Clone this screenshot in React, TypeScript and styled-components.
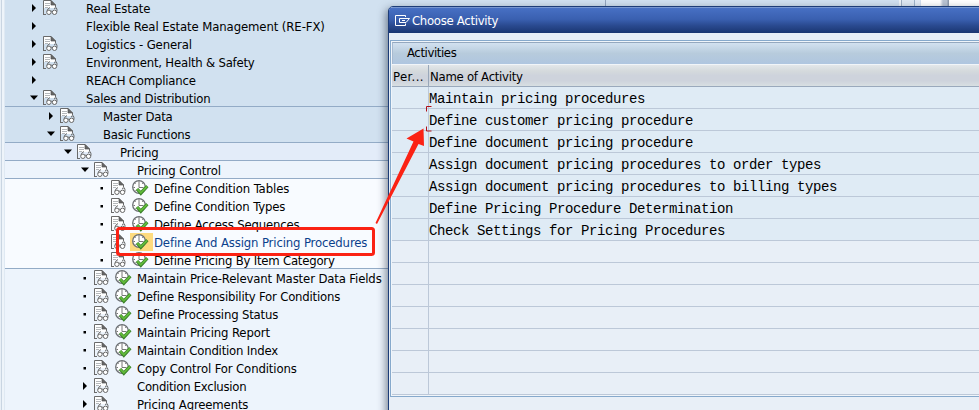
import React from 'react';
import styled, { createGlobalStyle, css } from 'styled-components';

const GlobalStyle = createGlobalStyle`
  *, *::before, *::after { box-sizing: border-box; }
  html, body { margin: 0; padding: 0; overflow: hidden; }
  body { font-family: "DejaVu Sans Condensed", "DejaVu Sans", sans-serif; font-stretch: condensed; font-size: 13px; color: #000; }
`;

const Screen = styled.main`
  position: relative;
  display: flex;
  width: 979px;
  height: 410px;
  overflow: hidden;
  background: #fff;
`;

const Gutter = styled.div`
  flex: 0 0 5px;
  background: linear-gradient(90deg, #e9f0f7 0 1px, #c9d5e2 1px 2px, #eef4fa 2px 4px, #dfe9f3 4px 5px);
`;

const Tree = styled.ul`
  flex: 0 0 894px;
  margin: -1px 0 0;
  padding: 0;
  list-style: none;
  background: linear-gradient(90deg, transparent 600px, #93a5bd 600px 601px, transparent 601px) #d1e1f0;
`;

const Edge = styled.div`
  flex: 1;
  background: linear-gradient(90deg,
    #eef3f8 0 2px, #9fb0c3 2px 3px, #dfe9f3 3px 15px, #9fb4c9 15px 16px,
    #e2ebf5 16px 21px, #d5e0ee 21px 22px, #fff 22px 41px,
    #e6eaf0 42px, #b8c3d2 44px 48px, #8e9bac 49px 50px, #fff 50px);
`;

const Node = styled.li<{ $level: number; $tone: string; $ruled?: boolean }>`
  display: grid;
  grid-template-columns: 15px 21px 23px 1fr;
  grid-template-rows: 18px;
  align-items: center;
  height: 18px;
  padding-left: ${(p) => 21 + p.$level * 17}px;
  background: ${(p) => p.$tone};
  ${(p) => p.$ruled && css`box-shadow: inset 0 -1px #93abc6;`}
`;

const Slot = styled.span<{ $marked?: boolean }>`
  display: flex;
  align-items: center;
  height: 18px;
  padding-left: 2px;
  background: ${(p) => (p.$marked ? '#fddb7f' : 'transparent')};
  svg { display: block; }
`;

const Label = styled.span<{ $tracking: number; $active?: boolean }>`
  height: 18px;
  padding-left: 1px;
  justify-self: start;
  white-space: nowrap;
  line-height: 20px;
  letter-spacing: ${(p) => p.$tracking}px;
  color: ${(p) => (p.$active ? '#0b3f8c' : '#000')};
`;

const Dialog = styled.section`
  position: absolute;
  left: 388px;
  top: 6px;
  width: 620px;
  height: 430px;
  border: 1px solid #1d3d78;
  border-radius: 5px 0 0 0;
  background: #e8eff7;
  box-shadow: -2px 3px 8px rgba(30, 40, 60, 0.55);
  overflow: hidden;
`;

const TitleBar = styled.header`
  display: flex;
  align-items: center;
  gap: 2px;
  height: 26px;
  padding-left: 6px;
  border-top: 1px solid #7796cf;
  background: linear-gradient(#4770c4, #3a60b0 45%, #2a4a90 70%, #1a3671);
  color: #fff;
`;

const Title = styled.h1`
  margin: 0;
  font-size: 13px;
  font-weight: 400;
  letter-spacing: -0.3px;
`;

const Frame = styled.div`
  margin: 7px 0 0 1px;
  height: 357px;
  padding: 1px 0 0 1px;
  border: 1px solid #86a9cc;
  background: #f0f5fa;
`;

const Toolbar = styled.div`
  height: 22px;
  padding-left: 14px;
  line-height: 20px;
  border-top: 1px solid #94a8bf;
  border-left: 1px solid #a7bad0;
  background: linear-gradient(#d2e1f0, #b7cbdc 50%, #afc6e0);
  letter-spacing: -0.4px;
`;

const HeaderRow = styled.div`
  display: grid;
  grid-template-columns: 36px 1fr;
  height: 23px;
  border-top: 1px solid #f1f5f9;
  border-bottom: 1px solid #9aa9bc;
  background: linear-gradient(#e3e7ea, #d4d9dc 30%, #ced3dc 50%, #ced3dc 75%, #d8dfe2);
`;

const HeaderCell = styled.span<{ $divided?: boolean; $tracking?: number }>`
  height: 21px;
  padding-left: 1px;
  line-height: 23px;
  white-space: nowrap;
  letter-spacing: ${(p) => p.$tracking ?? 0}px;
  border-left: ${(p) => (p.$divided ? '1px solid #98a7b9' : '0')};
`;

const Row = styled.div<{ $empty: boolean }>`
  display: grid;
  grid-template-columns: 36px 1fr;
  height: 22px;
  border-bottom: 1px solid #bcc8d8;
  background: ${(p) => (p.$empty ? '#e8eff7' : '#dfebf5')};
`;

const ActivityCell = styled.span`
  grid-column: 2;
  height: 21px;
  border-left: 1px solid #bcc8d8;
  font: 14px/24px "Liberation Mono", monospace;
  letter-spacing: -0.402px;
  white-space: pre;
`;

const Annotation = styled.svg`
  position: absolute;
  inset: 0;
  pointer-events: none;
`;

const DocIcon = () => (
  <svg width="15" height="16" viewBox="0 0 15 16" fill="none">
    <path d="M1 14V1h7.5l3.5 3.5V8H1" fill="#fff" />
    <path d="M.5 15V.5H8L12.500 5v2" stroke="#6a6a6a" />
    <path d="M8 .5V5h4.500z" fill="#666" stroke="#555" strokeWidth=".7" />
    <path d="M2 3.500h5M2 5.500h5M2 7.500h3" stroke="#b5b8bb" />
    <path d="M0 14.500h3" stroke="#6a6a6a" />
    <path d="M4 11.500C4.500 9 5.500 8 7 7.700M11 8.500l2.200-.8q1 1 .8 4" stroke="#666" />
    <circle cx="5.900" cy="12.300" r="2.200" fill="#fff" stroke="#666" />
    <circle cx="11.500" cy="12.300" r="2.200" fill="#fff" stroke="#666" />
    <path d="M8 11.500q.7-.7 1.400 0" stroke="#666" />
  </svg>
);

const ExecuteIcon = () => (
  <svg width="17" height="16" viewBox="0 0 17 16" fill="none">
    <circle cx="7" cy="7" r="6.300" fill="#fff" stroke="#6b6f73" strokeWidth="1.300" />
    <path d="M7 1v6.500h4.500M1.500 7.500H3M10.800 3.200l-.8.8M3 3.200l.8.8M3 11.300l1-1" stroke="#777" />
    <path d="M5 9l3.800 4.200L15.300 6.200" stroke="#3a7f2a" strokeWidth="3.300" />
    <path d="M5.300 9.200l3.500 3.600 6.200-6.300" stroke="#62bc3a" strokeWidth="1.800" />
  </svg>
);

const MARKERS = {
  closed: 'M6 5l4 4L6 13z',
  open: 'M4 6.500h8l-4 4.500z',
  leaf: 'M6.500 8h2.500v2.500H6.500z',
};

const Marker = ({ kind }: { kind: keyof typeof MARKERS }) => (
  <svg width="13" height="18" viewBox="0 0 13 18"><path d={MARKERS[kind]} fill="#000" /></svg>
);

const DialogIcon = () => (
  <svg width="15" height="13" viewBox="0 0 15 13" fill="none" stroke="#fff" strokeWidth="1">
    <path d="M10.500 3V1.500h-10v10h10V9.500" />
    <path d="M4.500 8.500v-4h10L11 8.500zM7 6.500h3" />
  </svg>
);

type Item = {
  text: string;
  level: number;
  kind: keyof typeof MARKERS;
  tone: string;
  doc?: boolean;
  exec?: boolean;
  ruled?: boolean;
  active?: boolean;
  tracking: number;
};

const NONE = 'transparent';
const TOP = '#e3ecf9';
const MID = '#edf4fc';
const LOW = '#f8fbff';

const items: Item[] = [
  { text: 'Real Estate', level: 0, kind: 'closed', tone: NONE, doc: true, tracking: -0.15 },
  { text: 'Flexible Real Estate Management (RE-FX)', level: 0, kind: 'closed', tone: NONE, tracking: -0.1 },
  { text: 'Logistics - General', level: 0, kind: 'closed', tone: NONE, doc: true, tracking: -0.13 },
  { text: 'Environment, Health & Safety', level: 0, kind: 'closed', tone: NONE, doc: true, tracking: -0.21 },
  { text: 'REACH Compliance', level: 0, kind: 'closed', tone: NONE, tracking: -0.19 },
  { text: 'Sales and Distribution', level: 0, kind: 'open', tone: NONE, doc: true, ruled: true, tracking: -0.2 },
  { text: 'Master Data', level: 1, kind: 'closed', tone: NONE, doc: true, tracking: -0.18 },
  { text: 'Basic Functions', level: 1, kind: 'open', tone: NONE, doc: true, ruled: true, tracking: -0.2 },
  { text: 'Pricing', level: 2, kind: 'open', tone: TOP, doc: true, ruled: true, tracking: -0.1 },
  { text: 'Pricing Control', level: 3, kind: 'open', tone: MID, doc: true, ruled: true, tracking: -0.1 },
  { text: 'Define Condition Tables', level: 4, kind: 'leaf', tone: LOW, doc: true, exec: true, tracking: -0.1 },
  { text: 'Define Condition Types', level: 4, kind: 'leaf', tone: LOW, doc: true, exec: true, tracking: -0.13 },
  { text: 'Define Access Sequences', level: 4, kind: 'leaf', tone: LOW, doc: true, exec: true, tracking: -0.17 },
  { text: 'Define And Assign Pricing Procedures', level: 4, kind: 'leaf', tone: LOW, doc: true, exec: true, active: true, tracking: -0.14 },
  { text: 'Define Pricing By Item Category', level: 4, kind: 'leaf', tone: LOW, doc: true, exec: true, ruled: true, tracking: -0.22 },
  { text: 'Maintain Price-Relevant Master Data Fields', level: 3, kind: 'leaf', tone: MID, doc: true, exec: true, tracking: -0.13 },
  { text: 'Define Responsibility For Conditions', level: 3, kind: 'leaf', tone: MID, doc: true, exec: true, tracking: -0.2 },
  { text: 'Define Processing Status', level: 3, kind: 'leaf', tone: MID, doc: true, exec: true, tracking: -0.17 },
  { text: 'Maintain Pricing Report', level: 3, kind: 'leaf', tone: MID, doc: true, exec: true, tracking: -0.13 },
  { text: 'Maintain Condition Index', level: 3, kind: 'leaf', tone: MID, doc: true, exec: true, tracking: -0.2 },
  { text: 'Copy Control For Conditions', level: 3, kind: 'leaf', tone: MID, doc: true, exec: true, tracking: -0.13 },
  { text: 'Condition Exclusion', level: 3, kind: 'closed', tone: MID, doc: true, tracking: -0.28 },
  { text: 'Pricing Agreements', level: 3, kind: 'closed', tone: MID, doc: true, tracking: -0.16 },
];

const activities = [
  'Maintain pricing procedures',
  'Define customer pricing procedure',
  'Define document pricing procedure',
  'Assign document pricing procedures to order types',
  'Assign document pricing procedures to billing types',
  'Define Pricing Procedure Determination',
  'Check Settings for Pricing Procedures',
  '', '', '', '', '', '', '',
];

export default function App() {
  return (
    <>
      <GlobalStyle />
      <Screen>
        <Gutter />
        <Tree>
          {items.map((it) => (
            <Node key={it.text} $level={it.level} $tone={it.tone} $ruled={it.ruled}>
              <Marker kind={it.kind} />
              <Slot>{it.doc && <DocIcon />}</Slot>
              <Slot $marked={it.active}>{it.exec && <ExecuteIcon />}</Slot>
              <Label $tracking={it.tracking} $active={it.active}>{it.text}</Label>
            </Node>
          ))}
        </Tree>
        <Edge />
        <Dialog>
          <TitleBar>
            <DialogIcon />
            <Title>Choose Activity</Title>
          </TitleBar>
          <Frame>
            <Toolbar>Activities</Toolbar>
            <HeaderRow>
              <HeaderCell $tracking={0.4}>Per...</HeaderCell>
              <HeaderCell $divided $tracking={-0.26}>Name of Activity</HeaderCell>
            </HeaderRow>
            {activities.map((name, i) => (
              <Row key={i} $empty={!name}>
                <ActivityCell>{name}</ActivityCell>
              </Row>
            ))}
          </Frame>
        </Dialog>
        <Annotation width="979" height="410" viewBox="0 0 979 410" fill="none">
          <path d="M431.500 106.500h-5v5M426.500 126.500v4.500h5" stroke="#b01018" />
          <rect x="117.500" y="228.500" width="256" height="26" rx="2" stroke="#fb2214" strokeWidth="3" />
          <path d="M423.500 128.500L406.500 138.500L413.500 141.500L375.500 223L377 224L418.500 144L424 146z" fill="#fb2214" />
        </Annotation>
      </Screen>
    </>
  );
}
